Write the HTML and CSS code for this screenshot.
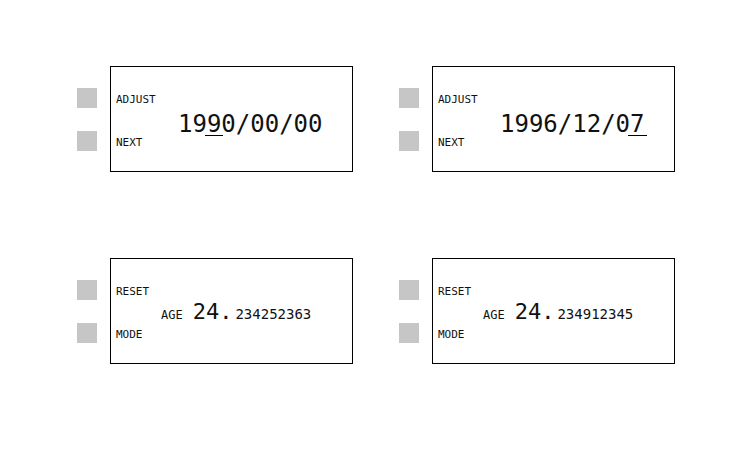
FILE: index.html
```html
<!DOCTYPE html>
<html>
<head>
<meta charset="utf-8">
<link rel="stylesheet" href="styles.css">
</head>
<body>
<main class="board">
  <section class="widget">
    <div class="buttons"><span class="btn"></span><span class="btn"></span></div>
    <div class="screen">
      <div class="labels"><span>ADJUST</span><span>NEXT</span></div>
      <div class="date">19<span class="cursor">9</span>0/00/00</div>
    </div>
  </section>
  <section class="widget">
    <div class="buttons"><span class="btn"></span><span class="btn"></span></div>
    <div class="screen">
      <div class="labels"><span>ADJUST</span><span>NEXT</span></div>
      <div class="date">1996/12/0<span class="cursor">7</span></div>
    </div>
  </section>
  <section class="widget">
    <div class="buttons"><span class="btn"></span><span class="btn"></span></div>
    <div class="screen">
      <div class="labels"><span>RESET</span><span>MODE</span></div>
      <div class="age"><span class="age-label">AGE</span><span class="age-int">24.</span><span class="age-frac">234252363</span></div>
    </div>
  </section>
  <section class="widget">
    <div class="buttons"><span class="btn"></span><span class="btn"></span></div>
    <div class="screen">
      <div class="labels"><span>RESET</span><span>MODE</span></div>
      <div class="age"><span class="age-label">AGE</span><span class="age-int">24.</span><span class="age-frac">234912345</span></div>
    </div>
  </section>
</main>
</body>
</html>
```

FILE: styles.css
```css
* { box-sizing: border-box; }
html, body { margin: 0; padding: 0; background: #fff; }
body {
  font-family: "DejaVu Sans Mono", "Liberation Mono", monospace;
  color: #111;
}
.board {
  display: grid;
  grid-template-columns: 276px 276px;
  column-gap: 46px;
  row-gap: 86px;
  padding: 66px 0 0 77px;
}
.widget {
  display: flex;
  gap: 13px;
}
.buttons {
  display: flex;
  flex-direction: column;
  gap: 23px;
  padding-top: 22px;
}
.btn {
  display: block;
  width: 20px;
  height: 20px;
  background: #c6c6c6;
}
.screen {
  width: 243px;
  height: 106px;
  border: 1px solid #000;
  display: flex;
}
.labels {
  width: 45px;
  flex: none;
  display: flex;
  flex-direction: column;
  gap: 30px;
  padding: 26px 0 0 5px;
  font-size: 11px;
  line-height: 13px;
}
.date {
  margin: 43px 0 0 22px;
  font-size: 24px;
  line-height: 28px;
  white-space: nowrap;
}
.cursor {
  position: relative;
}
.cursor::after {
  content: "";
  position: absolute;
  left: -2px;
  right: -2px;
  bottom: 2px;
  height: 1px;
  background: #000;
}
.age {
  margin: 40px 0 0 5px;
  font-size: 22px;
  line-height: 26px;
  white-space: nowrap;
}
.age-label { font-size: 12px; margin-right: 10px; }
.age-int { font-size: 22px; }
.age-frac { font-size: 14px; margin-left: 3px; }
```
